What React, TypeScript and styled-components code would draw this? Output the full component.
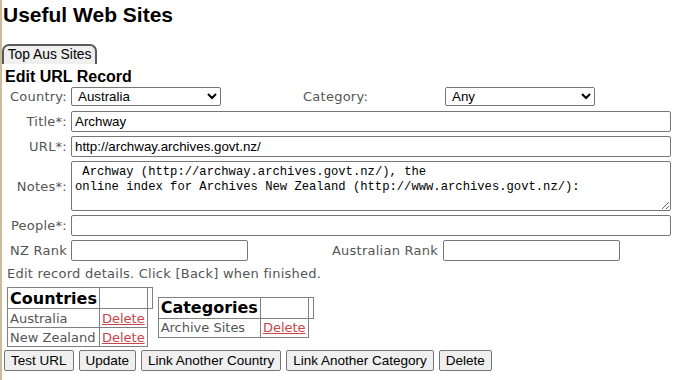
import React, { FunctionComponent, useState } from 'react'
import styled, { createGlobalStyle } from 'styled-components'

const GlobalStyle = createGlobalStyle`
  html, body {
    margin: 0;
    padding: 0;
    background: #ffffff;
  }
`

const App: FunctionComponent = () => {
    const [values, setValues] = useState<any>({
        country: 'Australia',
        category: 'Any',
        title: 'Archway',
        url: 'http://archway.archives.govt.nz/',
        notes: ' Archway (http://archway.archives.govt.nz/), the\nonline index for Archives New Zealand (http://www.archives.govt.nz/):',
        people: '',
        nzRank: '',
        auRank: '',
    });

    const onChange = (e: React.ChangeEvent<any>, name: string) => {
        const { value } = e.target;
        setValues({
            ...values,
            [name]: value
        });
    };

    return (
        <Page>
            <GlobalStyle />
            <Title>Useful Web Sites</Title>
            <Tab>Top Aus Sites</Tab>
            <SubTitle>Edit URL Record</SubTitle>
            <Form>
                <Row>
                    <Label>Country:</Label>
                    <SelectCell width={232}>
                        <Select width={150} value={values.country} onChange={e => onChange(e, 'country')}>
                            <option>Australia</option>
                            <option>New Zealand</option>
                        </Select>
                    </SelectCell>
                    <SideLabel width={142}>Category:</SideLabel>
                    <Select width={150} value={values.category} onChange={e => onChange(e, 'category')}>
                        <option>Any</option>
                        <option>Archive Sites</option>
                    </Select>
                </Row>
                <Row>
                    <Label>Title*:</Label>
                    <TextInput width={600} value={values.title} onChange={e => onChange(e, 'title')} />
                </Row>
                <Row>
                    <Label>URL*:</Label>
                    <TextInput width={600} value={values.url} onChange={e => onChange(e, 'url')} />
                </Row>
                <Row>
                    <Label>Notes*:</Label>
                    <Notes value={values.notes} onChange={e => onChange(e, 'notes')} />
                </Row>
                <Row>
                    <Label>People*:</Label>
                    <TextInput width={600} value={values.people} onChange={e => onChange(e, 'people')} />
                </Row>
                <Row>
                    <Label>NZ Rank</Label>
                    <TextInput width={177} value={values.nzRank} onChange={e => onChange(e, 'nzRank')} />
                    <RankLabel>Australian Rank</RankLabel>
                    <TextInput width={177} value={values.auRank} onChange={e => onChange(e, 'auRank')} />
                </Row>
            </Form>
            <Hint>Edit record details. Click [Back] when finished.</Hint>
            <Tables>
                <LinkTable>
                    <tbody>
                        <tr>
                            <Th>Countries</Th>
                            <Th></Th>
                            <Th narrow></Th>
                        </tr>
                        <tr>
                            <Td>Australia</Td>
                            <Td><DeleteLink href="#">Delete</DeleteLink></Td>
                        </tr>
                        <tr>
                            <Td>New Zealand</Td>
                            <Td><DeleteLink href="#">Delete</DeleteLink></Td>
                        </tr>
                    </tbody>
                </LinkTable>
                <LinkTable>
                    <tbody>
                        <tr>
                            <Th>Categories</Th>
                            <Th></Th>
                            <Th narrow></Th>
                        </tr>
                        <tr>
                            <Td>Archive Sites</Td>
                            <Td><DeleteLink href="#">Delete</DeleteLink></Td>
                        </tr>
                    </tbody>
                </LinkTable>
            </Tables>
            <Buttons>
                <Button>Test URL</Button>
                <Button>Update</Button>
                <Button>Link Another Country</Button>
                <Button>Link Another Category</Button>
                <Button>Delete</Button>
            </Buttons>
        </Page>
    )
};

export default App;

const Page = styled.div`
  border-left: 2px solid #cbbd9c;
  min-height: 380px;
  box-sizing: border-box;
  font-family: "Liberation Sans", Arial, sans-serif;
  color: #000;
`

const Title = styled.h1`
  margin: 0;
  padding: 3px 0 0 1px;
  height: 44px;
  box-sizing: border-box;
  font-size: 21px;
  line-height: 24px;
  font-weight: bold;
`

const Tab = styled.div`
  width: 95px;
  height: 20px;
  box-sizing: border-box;
  border: 2px solid #5a5a5a;
  border-bottom: none;
  border-radius: 7px 7px 0 0;
  background: #efefef;
  font-size: 13.8px;
  line-height: 18px;
  text-align: center;
  color: #000;
`

const SubTitle = styled.h2`
  margin: 0;
  padding: 3px 0 0 3px;
  height: 22px;
  box-sizing: border-box;
  font-size: 16px;
  line-height: 19px;
  font-weight: bold;
`

const Form = styled.div`
  display: flex;
  flex-direction: column;
  gap: 4px;
`

const Row = styled.div`
  display: flex;
  align-items: center;
  min-height: 21px;
`

const labelFont = `
  font-family: "DejaVu Sans", Verdana, sans-serif;
  font-size: 13px;
  letter-spacing: 0.25px;
  color: #555;
`

const Label = styled.div`
  ${labelFont}
  width: 65px;
  margin-right: 4px;
  text-align: right;
  white-space: nowrap;
`

const SelectCell = styled.div<{ width: number }>`
  width: ${p => p.width}px;
`

const SideLabel = styled.div<{ width: number }>`
  ${labelFont}
  width: ${p => p.width}px;
`

const RankLabel = styled.div`
  ${labelFont}
  width: 195px;
  padding-right: 5px;
  box-sizing: border-box;
  text-align: right;
  white-space: nowrap;
`

const Select = styled.select<{ width: number }>`
  width: ${p => p.width}px;
  height: 19px;
  box-sizing: border-box;
  border: 1px solid #767676;
  border-radius: 2px;
  background: #fff;
  font-family: "Liberation Sans", Arial, sans-serif;
  font-size: 13.33px;
  color: #000;
  padding: 0 0 0 2px;
`

const TextInput = styled.input<{ width: number }>`
  width: ${p => p.width}px;
  height: 21px;
  box-sizing: border-box;
  border: 1px solid #767676;
  border-radius: 2px;
  padding: 1px 3px;
  font-family: "Liberation Sans", Arial, sans-serif;
  font-size: 13.33px;
  color: #000;
  outline: none;
`

const Notes = styled.textarea`
  width: 600px;
  height: 50px;
  box-sizing: border-box;
  border: 1px solid #767676;
  border-radius: 2px;
  padding: 3px 3px;
  font-family: "Liberation Mono", "DejaVu Sans Mono", monospace;
  font-size: 12.2px;
  line-height: 15px;
  color: #000;
  outline: none;
`

const Hint = styled.div`
  ${labelFont}
  padding: 5px 0 0 5px;
  height: 26px;
  box-sizing: border-box;
  line-height: 16px;
`

const Tables = styled.div`
  display: flex;
  align-items: center;
  gap: 5px;
  padding-left: 5px;
`

const LinkTable = styled.table`
  border-collapse: collapse;
  font-family: "DejaVu Sans", Verdana, sans-serif;
`

const Th = styled.th<{ narrow?: boolean }>`
  border: 1px solid #808080;
  padding: 0 2px;
  height: 21px;
  box-sizing: border-box;
  width: ${p => (p.narrow ? '5px' : 'auto')};
  font-size: 16px;
  font-weight: bold;
  text-align: left;
  color: #000;
`

const Td = styled.td`
  border: 1px solid #808080;
  padding: 1px 2px;
  height: 19px;
  box-sizing: border-box;
  font-size: 13px;
  line-height: 15px;
  color: #555;
  white-space: nowrap;
`

const DeleteLink = styled.a`
  color: #c8464b;
  text-decoration: underline;
`

const Buttons = styled.div`
  display: flex;
  gap: 5px;
  padding: 3px 0 0 2px;
`

const Button = styled.button`
  height: 21px;
  box-sizing: border-box;
  border: 1px solid #767676;
  border-radius: 2px;
  background: #efefef;
  padding: 1px 6px;
  font-family: "Liberation Sans", Arial, sans-serif;
  font-size: 13.5px;
  color: #000;
`
